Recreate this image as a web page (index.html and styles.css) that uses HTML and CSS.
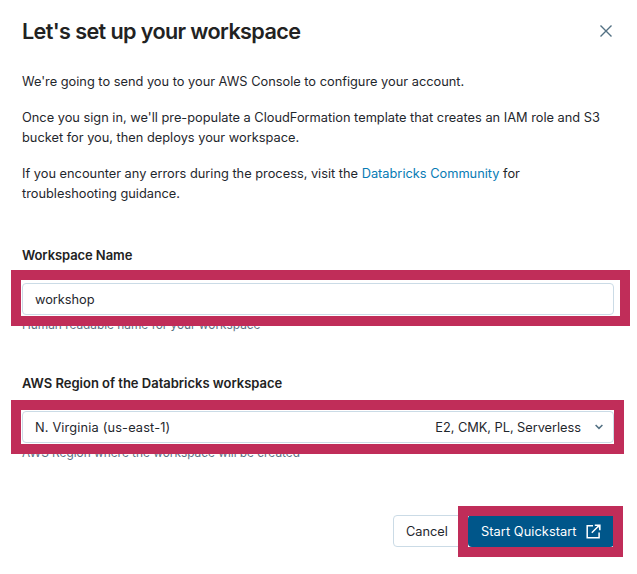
FILE: index.html
```html
<!DOCTYPE html>
<html lang="en">
<head>
<meta charset="utf-8">
<title>Let's set up your workspace</title>
<link rel="stylesheet" href="styles.css">
</head>
<body>
<main class="dialog">
  <header class="header">
    <h1 class="title">Let's set up your workspace</h1>
    <button class="close" aria-label="Close">
      <svg width="12" height="12" viewBox="0 0 12 12"><path d="M.5.5l11 11M11.5.5l-11 11" fill="none" stroke="currentColor" stroke-width="1.4"/></svg>
    </button>
  </header>
  <section class="intro">
    <p>We're going to send you to your AWS Console to configure your account.</p>
    <p>Once you sign in, we'll pre-populate a CloudFormation template that creates an IAM role and S3<br>bucket for you, then deploys your workspace.</p>
    <p>If you encounter any errors during the process, visit the <a class="link">Databricks Community</a> for<br>troubleshooting guidance.</p>
  </section>
  <section class="field">
    <h2 class="label name">Workspace Name</h2>
    <div class="control">
      <span class="text">workshop</span>
      <div class="highlight highlight-name"></div>
    </div>
    <p class="hint">Human readable name for your workspace</p>
  </section>
  <section class="field">
    <h2 class="label">AWS Region of the Databricks workspace</h2>
    <div class="control">
      <span class="text region">N. Virginia (us-east-1)</span>
      <span class="text features">E2, CMK, PL, Serverless</span>
      <svg class="chevron" width="8" height="6" viewBox="0 0 8 6"><path d="M.6 1L4 4.4 7.4 1" fill="none" stroke="currentColor" stroke-width="1.5"/></svg>
      <div class="highlight highlight-region"></div>
    </div>
    <p class="hint">AWS Region where the workspace will be created</p>
  </section>
  <footer class="actions">
    <button class="button cancel"><span class="text">Cancel</span></button>
    <button class="button primary">
      <span class="text start">Start Quickstart</span>
      <svg width="15" height="15" viewBox="0 0 15 15"><path d="M7 1.8H1.2v12h11.9V8.5M5.8 8.8l6.5-6.5" fill="none" stroke="currentColor" stroke-width="1.5"/><path d="M8.8.4h5.8v5.8h-1.5l-.1-2.5-1.7-1.7-2.5-.1z" fill="currentColor"/></svg>
      <div class="highlight highlight-start"></div>
    </button>
  </footer>
</main>
</body>
</html>
```

FILE: styles.css
```css
* { box-sizing: border-box; margin: 0; padding: 0; }
body {
  background: #fff;
  color: #1f272d;
  font: 400 12.8px/20px Inter, "Liberation Sans", sans-serif;
}
button { font: inherit; color: inherit; background: none; border: 0; }
svg { display: block; flex: none; }
.dialog { width: 637px; height: 574px; padding: 15px 23px 0 22px; overflow: hidden; }
.header { display: flex; align-items: center; height: 32px; justify-content: space-between; }
.title { font-size: 21.6px; line-height: 32px; font-weight: 600; color: #222; letter-spacing: -0.61px; }
.close { color: #527083; padding: 2px; }
.intro { margin-top: 25px; white-space: nowrap; }
.intro p { margin-bottom: 16px; }
.link { color: #077bb5; }
.field { height: 128px; }
.intro + .field { margin-top: 41px; }
.label { font-size: 13px; line-height: 20px; font-weight: 600; color: #222; letter-spacing: -0.01px; }
.name { letter-spacing: -0.08px; }
.control {
  position: relative;
  display: flex;
  align-items: center;
  height: 32px;
  margin-top: 18px;
  padding: 0 10px 0 12px;
  border: 1px solid #cbdbe6;
  border-radius: 4px;
}
.text { display: block; padding-top: 2px; letter-spacing: -0.03px; }
.region { letter-spacing: 0.15px; }
.features { margin-left: auto; margin-right: 14px; }
.start { letter-spacing: 0.06px; }
.chevron { color: #527083; }
.hint { font-size: 11.85px; color: #5a7182; }
.highlight { position: absolute; border: 10px solid #c02d59; pointer-events: none; }
.highlight-name { top: -14px; left: -12px; width: 619px; height: 56px; }
.highlight-region { top: -12px; left: -12px; width: 613px; height: 54px; }
.highlight-start { top: -9px; left: -10px; width: 165px; height: 51px; }
.actions { display: flex; margin-top: 14px; }
.button { height: 32px; border-radius: 4px; }
.cancel { width: 75px; border: 1px solid #cbdbe6; margin-left: 371px; padding-left: 12px; text-align: left; }
.primary { position: relative; display: flex; align-items: center; width: 146px; padding: 0 13px; background: #00568a; color: #fff; justify-content: space-between; white-space: nowrap; }
```
